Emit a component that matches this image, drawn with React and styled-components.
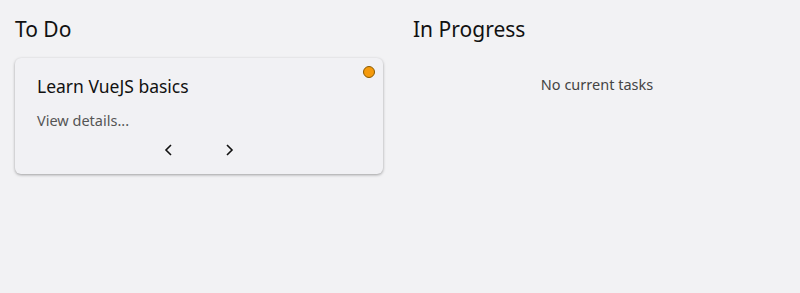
import styled, { createGlobalStyle } from 'styled-components';

const GlobalStyle = createGlobalStyle`
  body {
    margin: 0;
    background: #f2f2f4;
    font-family: "Noto Sans", "Open Sans", sans-serif;
    color: #111;
  }
`;

const Board = styled.div`
  display: grid;
  grid-template-columns: 368px 368px;
  column-gap: 30px;
  padding: 14px 15px;
`;

const Column = styled.section`
  display: flex;
  flex-direction: column;
`;

const ColumnTitle = styled.h2`
  margin: 0 0 14px 0;
  font-size: 21px;
  font-weight: 400;
  line-height: 30px;
`;

const Card = styled.div`
  position: relative;
  background: #f1f1f4;
  border-radius: 6px;
  box-shadow: 0 1px 3px rgba(0, 0, 0, 0.35);
  padding: 14px 22px 16px 22px;
`;

const Dot = styled.span`
  position: absolute;
  top: 8px;
  right: 8px;
  width: 10px;
  height: 10px;
  border-radius: 50%;
  background: ${(p) => p.color};
  border: 1px solid #8a5a00;
`;

const CardTitle = styled.div`
  font-size: 17.5px;
  line-height: 28px;
  margin-bottom: 8px;
`;

const Details = styled.div`
  font-size: 14.5px;
  line-height: 24px;
  color: #555;
`;

const Arrows = styled.div`
  display: flex;
  justify-content: center;
  gap: 44px;
  margin-top: 10px;
`;

const ArrowButton = styled.button`
  background: none;
  border: none;
  padding: 0;
  width: 16px;
  height: 16px;
  display: flex;
  align-items: center;
  justify-content: center;
  cursor: pointer;
`;

const Empty = styled.div`
  text-align: center;
  font-size: 14.5px;
  color: #444;
  margin-top: 16px;
`;

const Chevron = ({ dir }) => (
  <svg width="12" height="14" viewBox="0 0 12 14" fill="none" stroke="#111" strokeWidth="1.6">
    {dir === 'left' ? <path d="M8 2 L3 7 L8 12" /> : <path d="M4 2 L9 7 L4 12" />}
  </svg>
);

const App = () => {
  return (
    <>
      <GlobalStyle />
      <Board>
        <Column>
          <ColumnTitle>To Do</ColumnTitle>
          <Card>
            <Dot color="#f59a0c" />
            <CardTitle>Learn VueJS basics</CardTitle>
            <Details>View details...</Details>
            <Arrows>
              <ArrowButton><Chevron dir="left" /></ArrowButton>
              <ArrowButton><Chevron dir="right" /></ArrowButton>
            </Arrows>
          </Card>
        </Column>
        <Column>
          <ColumnTitle>In Progress</ColumnTitle>
          <Empty>No current tasks</Empty>
        </Column>
      </Board>
    </>
  );
};

export default App;
